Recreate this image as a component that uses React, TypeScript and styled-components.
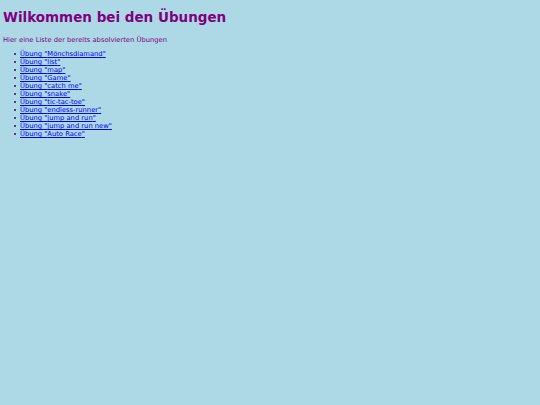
import React from "react";
import styled, { createGlobalStyle } from "styled-components";

const Global = createGlobalStyle`
  html, body {
    margin: 0;
    padding: 0;
    background: lightblue;
  }
  body {
    font-family: "DejaVu Sans", sans-serif;
  }
`;

const Page = styled.main`
  padding: 0 3px;
`;

const Title = styled.h1`
  margin: 0;
  padding-top: 9px;
  font-size: 13.5px;
  line-height: 16px;
  font-weight: bold;
  color: purple;
`;

const Intro = styled.p`
  margin: 11px 0 0;
  font-size: 6.75px;
  line-height: 8px;
  color: purple;
`;

const List = styled.ul`
  margin: 6px 0 0;
  padding-left: 17px;
  font-size: 6.75px;
  line-height: 8px;
  list-style: none;
`;

/* Each entry draws its own small bullet so it sits close to the link */
const Item = styled.li`
  display: flex;
  align-items: center;

  &::before {
    content: "";
    flex: none;
    width: 2px;
    height: 2px;
    margin-left: -6px;
    margin-right: 4px;
    background: #5a3a8a;
  }
`;

const Link = styled.a`
  color: #0000ee;
  text-decoration: underline;
`;

const exercises = [
  "Mönchsdiamand",
  "list",
  "map",
  "Game",
  "catch me",
  "snake",
  "tic-tac-toe",
  "endless-runner",
  "jump and run",
  "jump and run new",
  "Auto Race",
];

export default function App() {
  return (
    <>
      <Global />
      <Page>
        <Title>Wilkommen bei den Übungen</Title>
        <Intro>Hier eine Liste der bereits absolvierten Übungen</Intro>
        <List>
          {exercises.map((name) => (
            <Item key={name}>
              <Link href="#">Übung "{name}"</Link>
            </Item>
          ))}
        </List>
      </Page>
    </>
  );
}
